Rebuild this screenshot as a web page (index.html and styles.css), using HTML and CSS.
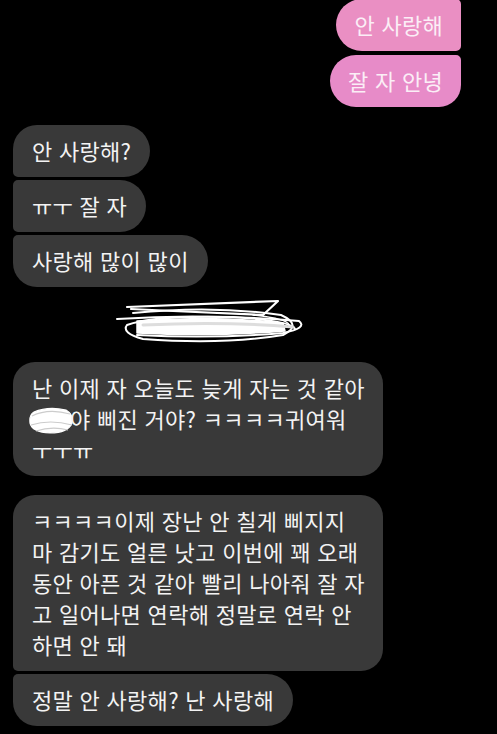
FILE: index.html
```html
<!DOCTYPE html>
<html lang="ko">
<head>
<meta charset="utf-8">
<title>Chat</title>
<link rel="stylesheet" href="styles.css">
</head>
<body>
<div class="chat">
  <div class="group out">
    <div class="bubble pink first">안 사랑해</div>
    <div class="bubble pink last">잘 자 안녕</div>
  </div>
  <div class="group in">
    <div class="bubble gray first">안 사랑해?</div>
    <div class="bubble gray mid">ㅠㅜ 잘 자</div>
    <div class="bubble gray last">사랑해 많이 많이</div>
  </div>
  <div class="redact">
    <svg width="200" height="50" viewBox="0 0 200 50" fill="none" stroke="#fff" stroke-linecap="round" stroke-linejoin="round">
      <path d="M14 12 L165 6 L150 20 L60 16 L18 14" stroke-width="2.2"/>
      <path d="M20 18 Q100 10 168 20 Q190 30 170 40 Q110 50 30 44 Q8 38 14 30 Q40 20 120 22 Q180 26 182 34" stroke-width="2"/>
      <path d="M4 24 Q90 18 186 26 Q195 33 170 38 Q100 44 24 40" stroke-width="2"/>
      <path d="M24 26 Q100 20 170 28 L172 36 Q100 42 24 38 Z" fill="#fff" stroke-width="1.5"/>
      <path d="M30 30 Q110 26 180 32" stroke="#ddd" stroke-width="3"/>
      <path d="M140 20 Q175 24 176 30" stroke-width="1.5"/>
    </svg>
  </div>
  <div class="group in">
    <div class="bubble gray wide single">난 이제 자 오늘도 늦게 자는 것 같아<br><span class="blob"><svg width="46" height="28" viewBox="0 0 46 28" fill="#fff" stroke="#fff" stroke-width="1.2"><path d="M6 6 Q20 0 38 4 Q46 9 44 17 Q40 27 22 27 Q4 26 2 17 Q1 9 6 6 Z"/><path d="M4 10 Q20 2 42 8 M3 19 Q22 13 44 19 M8 25 Q24 20 40 24" fill="none" stroke="#ccc"/></svg></span>야 삐진 거야? ㅋㅋㅋㅋ귀여워<br>ㅜㅜㅠ</div>
  </div>
  <div class="group in">
    <div class="bubble gray wide first">ㅋㅋㅋㅋ이제 장난 안 칠게 삐지지<br>마 감기도 얼른 낫고 이번에 꽤 오래<br>동안 아픈 것 같아 빨리 나아줘 잘 자<br>고 일어나면 연락해 정말로 연락 안<br>하면 안 돼</div>
    <div class="bubble gray last">정말 안 사랑해? 난 사랑해</div>
  </div>
</div>
</body>
</html>
```
FILE: styles.css
```css
html, body {
  margin: 0;
  padding: 0;
  background: #000;
}
body {
  width: 497px;
  height: 734px;
  overflow: hidden;
  font-family: "Noto Sans CJK KR", "Noto Sans", sans-serif;
  font-size: 22px;
  letter-spacing: 0.3px;
  color: #f3f3f3;
}
.chat {
  display: flex;
  flex-direction: column;
}
.group {
  display: flex;
  flex-direction: column;
  gap: 4px;
}
.group.in {
  gap: 3px;
}
.group.out {
  align-items: flex-end;
  padding-right: 36px;
  margin-top: -1px;
}
.group.in {
  align-items: flex-start;
  padding-left: 13px;
}
.group.out + .group.in {
  margin-top: 18px;
}
.bubble {
  line-height: 31px;
  padding: 10px 19px 11px 19px;
  white-space: nowrap;
}
.pink {
  background: #e98ec6;
  color: #fbeef6;
  padding-left: 18px;
  padding-right: 18px;
}
.pink.first { border-radius: 26px 5px 5px 26px; background: #ea8fc3; }
.pink.last { border-radius: 26px 5px 22px 26px; background: #e78bc8; }
.gray {
  background: #393939;
}
.gray.first { border-radius: 24px 26px 26px 5px; }
.gray.mid { border-radius: 5px 26px 26px 5px; }
.gray.last { border-radius: 5px 26px 26px 24px; }
.gray.single { border-radius: 22px; }
.gray.wide {
  width: 332px;
  border-radius: 22px;
}
.gray.wide.first { border-radius: 22px 22px 22px 5px; }
.group .gray.wide + .gray.last { border-radius: 5px 26px 26px 24px; }
.redact {
  height: 75px;
  display: flex;
  justify-content: center;
  align-items: flex-start;
  padding-right: 72px;
  padding-top: 8px;
  box-sizing: border-box;
}
.redact + .group.in + .group.in {
  margin-top: 19px;
}
.blob {
  display: inline-block;
  width: 42px;
  margin-left: -4px;
  vertical-align: -6px;
}
.blob svg { display: block; }
```
